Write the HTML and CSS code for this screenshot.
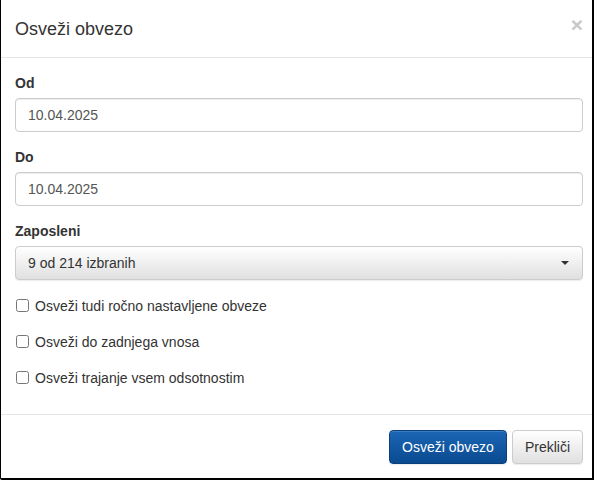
FILE: index.html
```html
<!DOCTYPE html>
<html>
<head>
<meta charset="utf-8">
<link rel="stylesheet" href="styles.css">
</head>
<body>
<div class="modal">
  <div class="modal-header">
    <h4 class="modal-title">Osveži obvezo</h4>
    <span class="close">×</span>
  </div>
  <div class="modal-body">
    <div class="form-group">
      <label class="lbl">Od</label>
      <div class="input">10.04.2025</div>
    </div>
    <div class="form-group">
      <label class="lbl">Do</label>
      <div class="input">10.04.2025</div>
    </div>
    <div class="form-group">
      <label class="lbl">Zaposleni</label>
      <div class="select">
        <span>9 od 214 izbranih</span>
        <span class="caret"></span>
      </div>
    </div>
    <div class="checks">
      <label class="check"><input type="checkbox"><span>Osveži tudi ročno nastavljene obveze</span></label>
      <label class="check"><input type="checkbox"><span>Osveži do zadnjega vnosa</span></label>
      <label class="check"><input type="checkbox"><span>Osveži trajanje vsem odsotnostim</span></label>
    </div>
  </div>
  <div class="modal-footer">
    <span class="btn btn-primary">Osveži obvezo</span>
    <span class="btn btn-default">Prekliči</span>
  </div>
</div>
</body>
</html>
```
FILE: styles.css
```css
* { box-sizing: border-box; }
html, body { margin: 0; padding: 0; background: #fff; }
body {
  font-family: "Liberation Sans", Arial, sans-serif;
  font-size: 14px;
  line-height: 20px;
  color: #333;
}
.modal {
  width: 594px;
  height: 480px;
  border-left: 1px solid #000;
  border-right: 2px solid #000;
  border-bottom: 2px solid #000;
  border-bottom-left-radius: 2px;
  display: flex;
  flex-direction: column;
}
.modal-header {
  display: flex;
  align-items: center;
  justify-content: space-between;
  padding: 15px 9px 15px 14px;
  height: 58px;
  border-bottom: 1px solid #e5e5e5;
}
.modal-title {
  margin: 0;
  font-size: 18px;
  font-weight: normal;
  line-height: 26px;
  color: #333;
}
.close {
  font-size: 21px;
  font-weight: bold;
  color: #c8c8c8;
  line-height: 21px;
  margin-top: -8px;
}
.modal-body {
  flex: 1;
  padding: 15px 9px 0 14px;
}
.form-group { margin-bottom: 15px; }
.lbl {
  display: block;
  font-weight: bold;
  margin-bottom: 5px;
  color: #333;
}
.input {
  height: 34px;
  border: 1px solid #ccc;
  border-radius: 4px;
  padding: 6px 12px;
  color: #555;
  box-shadow: inset 0 1px 1px rgba(0,0,0,.075);
}
.select {
  height: 34px;
  border: 1px solid #ccc;
  border-radius: 4px;
  padding: 6px 12px;
  color: #333;
  display: flex;
  align-items: center;
  justify-content: space-between;
  background: linear-gradient(to bottom, #fff 0%, #e0e0e0 100%);
  box-shadow: inset 0 1px 0 rgba(255,255,255,.15), 0 1px 1px rgba(0,0,0,.075);
}
.caret {
  width: 0;
  height: 0;
  border-top: 4px solid #333;
  border-left: 4px solid transparent;
  border-right: 4px solid transparent;
  margin-right: 1px;
}
.checks {
  display: flex;
  flex-direction: column;
  gap: 15px;
  margin-top: 1px;
}
.check {
  display: flex;
  align-items: center;
  height: 21px;
  color: #333;
}
.check input {
  margin: 0 6px 0 1px;
  width: 13px;
  height: 13px;
}
.modal-footer {
  border-top: 1px solid #e5e5e5;
  padding: 15px 9px 14px 14px;
  display: flex;
  justify-content: flex-end;
  gap: 5px;
}
.btn {
  display: inline-block;
  height: 34px;
  padding: 6px 12px;
  border-radius: 4px;
  border: 1px solid #ccc;
  font-size: 14px;
  line-height: 20px;
}
.btn-primary {
  color: #fff;
  border-color: #0b3f7a;
  background: linear-gradient(to bottom, #1b66b5 0%, #0a4a90 100%);
  box-shadow: inset 0 1px 0 rgba(255,255,255,.15), 0 1px 1px rgba(0,0,0,.075);
}
.btn-default {
  color: #333;
  border-color: #ccc;
  background: linear-gradient(to bottom, #fff 0%, #e0e0e0 100%);
  box-shadow: inset 0 1px 0 rgba(255,255,255,.15), 0 1px 1px rgba(0,0,0,.075);
}
```
